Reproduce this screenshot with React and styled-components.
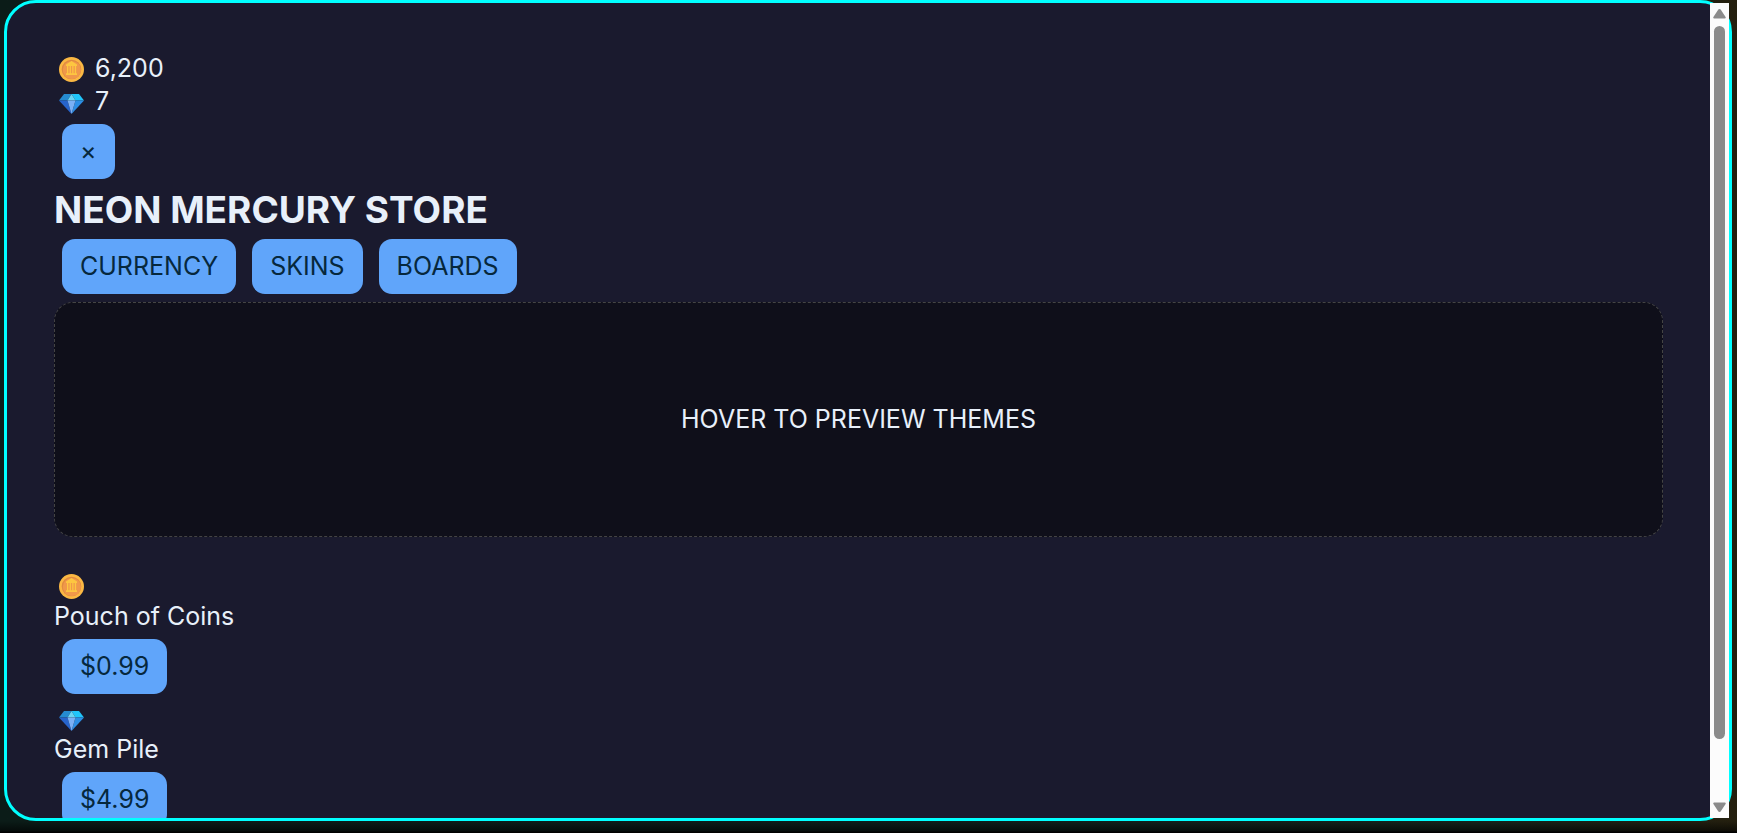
import React from "react";
import styled, { createGlobalStyle } from "styled-components";

const Global = createGlobalStyle`
  *, *::before, *::after { box-sizing: border-box; }
  body {
    margin: 0;
    overflow: hidden;
    background: #060d0d;
    color: #e8f0fa;
    font: 25px/33px Inter, "Liberation Sans", sans-serif;
  }
`;

const Page = styled.main`
  display: flex;
  height: 100vh;
  padding: 0 5px 12px 4px;
  background:
    linear-gradient(0deg, #000 1px, rgba(0, 0, 0, 0.6) 2px, rgba(0, 0, 0, 0) 12px),
    linear-gradient(90deg, #0b1c18, #0c1f1c 50%, #15251d 85%, #241f0e);
`;

const Modal = styled.section`
  display: flex;
  flex: 1;
  min-width: 0;
  border: 3px solid #00ffff;
  border-radius: 32px;
  background: #1a1a2e;
`;

const Content = styled.div`
  flex: 1;
  min-width: 0;
  padding: 47px;
  overflow: hidden;
`;

const IconRow = styled.div`
  display: flex;
  align-items: center;
  gap: 7px;
  height: 33px;
`;

const Balance = styled(IconRow)`
  padding-top: 3px;
`;

const Icon = styled.svg`
  display: block;
  flex: none;
  width: 25px;
  height: 25px;
  margin: 2px 4px 0 5px;
`;

const Button = styled.button`
  height: 55px;
  margin: 8px;
  padding: 0 18px;
  border: 0;
  border-radius: 13px;
  background: #60a5fa;
  color: #06283d;
  font: inherit;
  cursor: pointer;
`;

const Title = styled.h2`
  margin: 0;
  padding-top: 2px;
  font-size: 37px;
  line-height: 42px;
  font-weight: 700;
`;

const ButtonRow = styled.div`
  display: flex;
`;

const Preview = styled.div`
  display: flex;
  align-items: center;
  justify-content: center;
  height: 235px;
  margin-bottom: 32px;
  border: 1px dashed #444;
  border-radius: 19px;
  background: #0f0f1a;
`;

const Name = styled.div`
  line-height: 29px;
`;

const Scrollbar = styled.div`
  display: flex;
  flex-direction: column;
  align-items: center;
  width: 19px;
  padding: 6px 0;
  background: #fcfcfc;
`;

const Arrow = styled.svg`
  display: block;
  flex: none;
  width: 13px;
  height: 10px;
  fill: #8b8b8b;
`;

const Track = styled.div`
  flex: 1;
  width: 11px;
  padding: 7px 0 1px;
`;

const Thumb = styled.div`
  height: 92%;
  border-radius: 6px;
  background: #8b8b8b;
`;

function Coin() {
  return (
    <Icon viewBox="0 0 25 25" role="img" aria-label="Coins">
      <circle cx="12.5" cy="12.5" r="12.5" fill="#fbb843" />
      <circle cx="12.5" cy="12.5" r="9.8" fill="#e08a40" />
      <circle cx="12.9" cy="13" r="9.1" fill="#f0984a" />
      <path d="M12.5 4 18 7.500V9H7V7.500zM8 9h1.300v7.500H8zm2.600 0h1.300v7.500h-1.300zm2.600 0h1.300v7.500h-1.300zm2.600 0h1.300v7.500h-1.300zM7 16.200h11V18H7z" fill="#fdc640" />
    </Icon>
  );
}

function Gem() {
  return (
    <Icon viewBox="0 0 25 25" role="img" aria-label="Gems">
      <path d="M5 4h7.500L8.500 10.500H0z" fill="#258bd0" />
      <path d="M12.500 4H20l5 6.500h-8.500z" fill="#20c5fa" />
      <path d="M12.500 4 16.500 10.500h-8z" fill="#67d5f5" />
      <path d="M0 10.500h8.500l4 13.500z" fill="#2764cc" />
      <path d="M25 10.500h-8.500l-4 13.500z" fill="#2d8ee5" />
      <path d="M8.500 10.500h8l-4 13.500z" fill="#7bb0f5" />
    </Icon>
  );
}

const balances = [
  { icon: Coin, amount: "6,200" },
  { icon: Gem, amount: "7" },
];
const tabs = ["CURRENCY", "SKINS", "BOARDS"];
const items = [
  { icon: Coin, name: "Pouch of Coins", price: "$0.99" },
  { icon: Gem, name: "Gem Pile", price: "$4.99" },
];

export default function App() {
  return (
    <Page>
      <Global />
      <Modal aria-labelledby="store-title">
        <Content>
          {balances.map(({ icon: Glyph, amount }) => (
            <Balance key={amount}>
              <Glyph />
              <span>{amount}</span>
            </Balance>
          ))}
          <ButtonRow>
            <Button type="button" aria-label="Close">×</Button>
          </ButtonRow>
          <Title id="store-title">NEON MERCURY STORE</Title>
          <ButtonRow as="nav">
            {tabs.map((t) => (
              <Button key={t} type="button">{t}</Button>
            ))}
          </ButtonRow>
          <Preview>HOVER TO PREVIEW THEMES</Preview>
          {items.map(({ icon: Glyph, name, price }) => (
            <article key={name}>
              <IconRow>
                <Glyph />
              </IconRow>
              <Name>{name}</Name>
              <ButtonRow>
                <Button type="button">{price}</Button>
              </ButtonRow>
            </article>
          ))}
        </Content>
        <Scrollbar aria-hidden="true">
          <Arrow viewBox="0 0 13 10"><path d="M6.500 0Q7.500 0 8 1l4.600 7q.6 1.500-.9 1.500H1.300q-1.500 0-.9-1.500L5 1q.5-1 1.500-1z" /></Arrow>
          <Track>
            <Thumb />
          </Track>
          <Arrow viewBox="0 0 13 10"><path d="M6.500 10q1 0 1.500-1l4.600-7q.6-1.500-.9-1.500H1.300Q-.2.5.4 2L5 9q.5 1 1.500 1z" /></Arrow>
        </Scrollbar>
      </Modal>
    </Page>
  );
}
